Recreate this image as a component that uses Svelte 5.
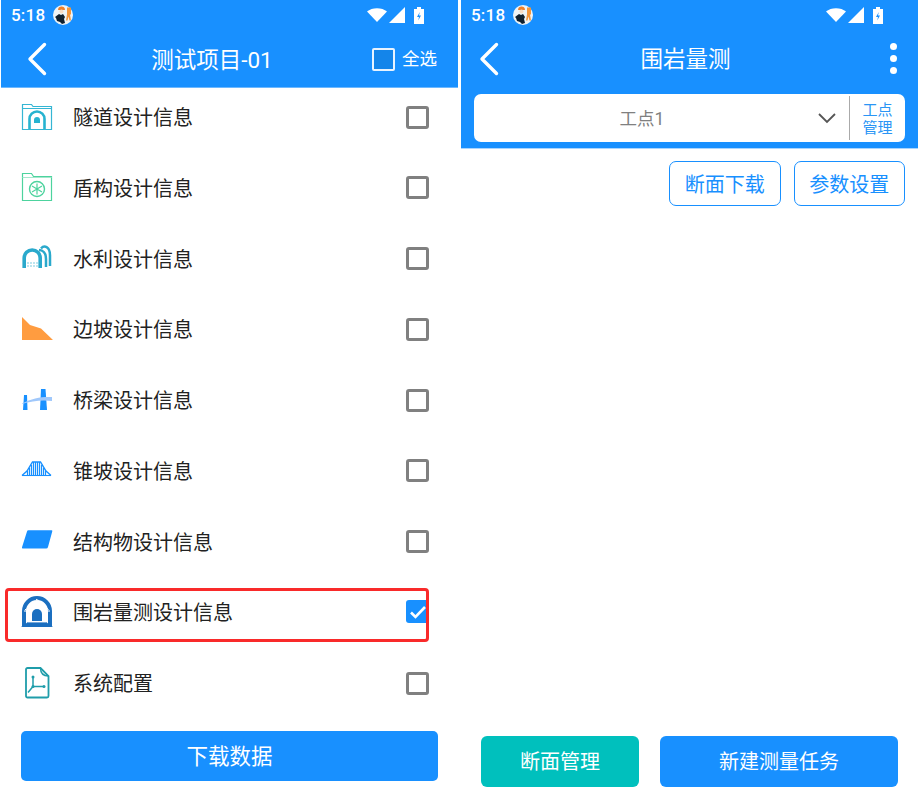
<script>
  const items = [
    { label: '隧道设计信息', icon: 'tunnel' },
    { label: '盾构设计信息', icon: 'shield' },
    { label: '水利设计信息', icon: 'water' },
    { label: '边坡设计信息', icon: 'slope' },
    { label: '桥梁设计信息', icon: 'bridge' },
    { label: '锥坡设计信息', icon: 'cone' },
    { label: '结构物设计信息', icon: 'struct' },
    { label: '围岩量测设计信息', icon: 'rock', checked: true },
    { label: '系统配置', icon: 'pdf' }
  ];
  // x, top of each hanger on the cone icon
  const coneBars = [[6, 17], [8, 14], [10, 11], [12, 8], [14, 8], [16, 8], [18, 8], [20, 11], [22, 14], [24, 17]];
</script>

{#snippet statusBar()}
  <div class="status">
    <span class="time">5:18</span>
    <svg class="avatar" width="20" height="20" viewBox="0 0 20 20">
      <circle cx="10" cy="10" r="10" fill="#eef3f6" />
      <path d="M5 5c0-2.500 1.500-3.500 3.500-3.500S12 2.500 12 5z" fill="#f0812a" />
      <circle cx="8.500" cy="6.500" r="2" fill="#f6dcc4" />
      <path d="M2 12l4-3 2 1 2-1 2 3-1 2 1 4-3 1-2-2-3-1-1-3z" fill="#10202f" />
      <path d="M14 2.500h4v7h-1l1 6h-1.500l-1-4-1 4H13l1-6z" fill="#f2953c" />
    </svg>
    <span class="status-right">
      <svg width="20" height="14" viewBox="0 0 20 14"><path d="M0 3.500C5-1 15-1 20 3.500L10 14z" fill="#fff" /></svg>
      <svg width="16" height="16" viewBox="0 0 16 16"><path d="M16 0v16H0z" fill="#fff" /></svg>
      <svg width="10" height="17" viewBox="0 0 10 17">
        <path d="M3 0h4v2h3v15H0V2h3z" fill="#fff" />
        <path d="M5.800 5 3 10h2l-.8 3.500L7 8.500H5z" fill="#1890ff" />
      </svg>
    </span>
  </div>
{/snippet}

{#snippet backIcon()}
  <svg class="back" width="20" height="34" viewBox="0 0 20 34">
    <path d="M17.500 2.500 3 17l14.500 14.500" fill="none" stroke="#fff" stroke-width="3.400" stroke-linecap="round" stroke-linejoin="round" />
  </svg>
{/snippet}

{#snippet rowIcon(name)}
  <svg width="32" height="32" viewBox="0 0 32 32">
    {#if name === 'tunnel'}
      <path d="M1.500 28.500V3.500h9l1.500 2h18.500v23z" fill="none" stroke="#35b6d4" stroke-width="1.200" />
      <path d="M1.500 7.500h29" stroke="#35b6d4" stroke-width="1" />
      <path d="M8.500 28V18a7.500 7.500 0 0 1 15 0v10" fill="none" stroke="#27b3d0" stroke-width="2.600" />
      <path d="M13 22v-3a3 3 0 0 1 6 0v3z" fill="#27b3d0" />
    {:else if name === 'shield'}
      <path d="M1.500 29.500V2.500h9l2 3h18v24z" fill="none" stroke="#4dd39e" stroke-width="1.200" />
      <path d="M1.500 6.500h29" stroke="#a5e8cd" stroke-width="1" />
      <circle cx="16" cy="18" r="7.500" fill="none" stroke="#4dd39e" stroke-width="1.400" />
      <path d="M16 12.500v11M11 15l10 6M21 15l-10 6" stroke="#4dd39e" stroke-width="1.200" />
    {:else if name === 'water'}
      <path d="M20 6.500c3-3.500 9-2.500 9 7V24" fill="none" stroke="#2aa9cc" stroke-width="2.500" />
      <path d="M18 8c4 0 7 3 7 9v8" fill="none" stroke="#2aa9cc" stroke-width="2.500" />
      <path d="M3.200 26V16a8 8 0 0 1 16 0V26" fill="none" stroke="#2aa9cc" stroke-width="3.600" />
      <path d="M6 21h11M6 24h11" stroke="#7ccbe0" stroke-width="1.200" stroke-dasharray="2 1" />
    {:else if name === 'slope'}
      <path d="M1 4v23h31L20 15.500 9 12z" fill="#ff9c40" />
    {:else if name === 'bridge'}
      <path d="M3 11h3l.5 15H2z" fill="#1890ff" />
      <path d="M20 5h4.500l1.500 21h-7z" fill="#1890ff" />
      <path d="M1 19.500c10-5.500 20-7 30-6.500v4c-10-1.500-20 0-30 3z" fill="#a0c8fb" />
    {:else if name === 'cone'}
      <path d="M1 21.500h29" stroke="#1890ff" stroke-width="1.100" />
      <path d="M1 21.500 6 17l5.500-9h8l5.500 9 5 4.500" stroke="#1890ff" stroke-width="1.400" fill="none" />
      {#each coneBars as [x, top]}
        <path d={`M${x + .5} 22V${top}`} stroke="#1890ff" stroke-width="1.200" />
      {/each}
    {:else if name === 'struct'}
      <path d="M6 6.500a1.500 1.500 0 0 1 1.500-1.200h23a.8.800 0 0 1 .8 1L27 22a2 2 0 0 1-2 1.500H2a1 1 0 0 1-1-1.300z" fill="#1890ff" />
    {:else if name === 'rock'}
      <path d="M1 30V15a15 15 0 0 1 30 0v15h-4V15a11 11 0 0 0-22 0v15z" fill="#1b6fc0" />
      <path d="M4 14 16 3l12 11" fill="none" stroke="#fff" stroke-width="1" stroke-dasharray="2 1" />
      <path d="M3 15h26" stroke="#fff" stroke-width="1" stroke-dasharray="2 1" />
      <path d="M11 25v-7a5 5 0 0 1 10 0v7z" fill="#1b6fc0" />
      <path d="M0 31l7-5h18l7 5z" fill="#1b6fc0" />
      <path d="M7 26h18" stroke="#fff" stroke-width=".8" />
    {:else if name === 'pdf'}
      <path d="M5 2.500a1.500 1.500 0 0 1 1.500-1.500h13l8 8v20a1.500 1.500 0 0 1-1.500 1.500H6.500A1.500 1.500 0 0 1 5 29z" fill="none" stroke="#1f9daa" stroke-width="1.800" />
      <path d="M19.500 1c0 5 3 8 8 8" fill="none" stroke="#1f9daa" stroke-width="1.400" />
      <path d="M12 9v10.500h11M12 19.500l-5 6" fill="none" stroke="#1f9daa" stroke-width="1.500" />
      <circle cx="12" cy="10" r="1.500" fill="#1f9daa" />
      <circle cx="23" cy="19.500" r="1.500" fill="#1f9daa" />
      <circle cx="12" cy="19.500" r="1.500" fill="#1f9daa" />
    {/if}
  </svg>
{/snippet}

<div class="page">
  <section class="phone">
    <header class="bar">
      {@render statusBar()}
      <div class="toolbar">
        {@render backIcon()}
        <h1>测试项目-01</h1>
        <div class="select-all">
          <span class="all-box"></span>
          <span>全选</span>
        </div>
      </div>
    </header>

    <ul class="list">
      {#each items as item}
        <li class="row">
          <span class="row-icon">{@render rowIcon(item.icon)}</span>
          <span class="row-label">{item.label}</span>
          {#if item.checked}
            <span class="check on">
              <svg width="18" height="14" viewBox="0 0 18 14"><path d="M2 7.500 6.500 12 16 2" fill="none" stroke="#fff" stroke-width="2.600" /></svg>
            </span>
          {:else}
            <span class="check"></span>
          {/if}
          {#if item.checked}<span class="highlight"></span>{/if}
        </li>
      {/each}
    </ul>

    <button class="download">下载数据</button>
  </section>

  <section class="phone right">
    <header class="bar">
      {@render statusBar()}
      <div class="toolbar">
        {@render backIcon()}
        <h1>围岩量测</h1>
        <div class="dots"><i></i><i></i><i></i></div>
      </div>
      <div class="picker">
        <span class="picker-value">工点1</span>
        <svg class="chevron" width="20" height="12" viewBox="0 0 20 12"><path d="M2 2l8 8 8-8" fill="none" stroke="#555" stroke-width="1.800" /></svg>
        <span class="picker-manage">工点<br />管理</span>
      </div>
    </header>

    <div class="actions">
      <button class="outline">断面下载</button>
      <button class="outline">参数设置</button>
    </div>

    <div class="footer">
      <button class="solid teal">断面管理</button>
      <button class="solid blue">新建测量任务</button>
    </div>
  </section>
</div>

<style>
  :global(body) {
    margin: 0;
    background: #fff;
  }

  .page {
    display: flex;
    gap: 3px;
    width: 919px;
    height: 799px;
    padding-left: 1px;
    box-sizing: border-box;
    font-family: Roboto, "Noto Sans CJK SC", sans-serif;
    overflow: hidden;
  }

  .phone {
    position: relative;
    display: flex;
    flex-direction: column;
    width: 457px;
    flex: none;
  }

  .bar {
    background: #1890ff;
    border-bottom: 1px solid #6db8ff;
    color: #fff;
  }

  .right .bar {
    border-bottom-color: #a9d5ff;
    padding-bottom: 6px;
  }

  .status {
    display: flex;
    align-items: center;
    height: 30px;
    padding: 0 0 0 10px;
  }

  .time {
    font-size: 17px;
    font-weight: 500;
    letter-spacing: .2px;
    width: 42px;
  }

  .status-right {
    display: flex;
    align-items: center;
    gap: 2px;
    margin-left: auto;
    margin-right: 34px;
  }

  .right .status-right {
    margin-right: 35px;
  }

  .status-right svg:last-child {
    margin-left: 7px;
  }

  .toolbar {
    position: relative;
    display: flex;
    align-items: center;
    justify-content: center;
    height: 57px;
    padding-right: 35px;
  }

  .right .toolbar {
    height: 56px;
    margin-bottom: 8px;
    padding-right: 8px;
  }

  .toolbar h1 {
    margin: 0 0 2px;
    font-size: 22.500px;
    font-weight: 400;
  }

  .back {
    position: absolute;
    left: 26px;
    top: 12px;
  }

  .right .back {
    left: 18px;
    top: 12px;
  }

  .select-all {
    position: absolute;
    right: 21px;
    top: 17px;
    display: flex;
    align-items: center;
    gap: 7px;
    font-size: 17.500px;
    line-height: 24px;
  }

  .all-box {
    flex: none;
    width: 23px;
    height: 23px;
    box-sizing: border-box;
    border: 2.500px solid #e8f3ff;
    border-radius: 2px;
    background: #1485ea;
  }

  .dots {
    position: absolute;
    right: 21px;
    top: 13px;
    display: flex;
    flex-direction: column;
    gap: 5px;
  }

  .dots i {
    width: 7px;
    height: 7px;
    border-radius: 50%;
    background: #fff;
  }

  .list {
    list-style: none;
    margin: -0.500px 0 0;
    padding: 0;
    display: flex;
    flex-direction: column;
    gap: 12.750px;
  }

  .row {
    position: relative;
    display: flex;
    align-items: center;
    height: 58px;
    padding: 0 29px 0 20px;
  }

  .row-icon {
    display: flex;
    width: 32px;
    margin-right: 20px;
  }

  .row-label {
    flex: 1;
    font-size: 20px;
    color: #222;
  }

  .check {
    width: 23px;
    height: 23px;
    margin-top: 1px;
    box-sizing: border-box;
    border: 3px solid #808080;
    border-radius: 3px;
    background: #fff;
  }

  .check.on {
    display: flex;
    align-items: center;
    justify-content: center;
    margin-top: 0;
    border: 0;
    background: #1890ff;
  }

  .highlight {
    position: absolute;
    left: 4px;
    right: 29px;
    top: 5px;
    height: 54px;
    box-sizing: border-box;
    border: 3px solid #f92a2a;
    border-radius: 4px;
    pointer-events: none;
  }

  .download {
    display: block;
    width: 417px;
    height: 50px;
    margin: 19.500px 0 0 20px;
    padding: 0 0 3px;
    border: 0;
    border-radius: 5px;
    background: #1890ff;
    color: #fff;
    font: inherit;
    font-size: 21.500px;
  }

  .picker {
    display: flex;
    align-items: center;
    height: 48px;
    margin: 0 13px;
    border-radius: 7px;
    background: #fff;
    color: #808080;
  }

  .picker-value {
    flex: 1;
    margin-bottom: 2px;
    text-align: center;
    font-size: 17.500px;
    padding-left: 16px;
    padding-right: 23px;
    box-sizing: border-box;
  }

  .chevron {
    margin-right: 12px;
  }

  .picker-manage {
    width: 56px;
    height: 44px;
    box-sizing: border-box;
    border-left: 1.500px solid #aaa;
    color: #2a95f5;
    font-size: 15px;
    line-height: 18px;
    text-align: center;
    padding-top: 5px;
  }

  .actions {
    display: flex;
    justify-content: flex-end;
    gap: 13px;
    padding: 12px 13px 0 0;
  }

  .outline {
    width: 111.500px;
    height: 45px;
    border: 1.500px solid #1890ff;
    border-radius: 7px;
    background: #fff;
    color: #1890ff;
    font: inherit;
    font-size: 20px;
    padding: 0;
  }

  .footer {
    display: flex;
    gap: 21px;
    margin-top: auto;
    padding: 0 20px 12px 20px;
  }

  .solid {
    height: 51px;
    border: 0;
    border-radius: 6px;
    color: #fff;
    font: inherit;
    font-size: 20px;
    padding: 0 0 2px;
  }

  .teal {
    width: 158px;
    background: #00c0bd;
  }

  .blue {
    width: 238px;
    background: #1890ff;
  }
</style>
